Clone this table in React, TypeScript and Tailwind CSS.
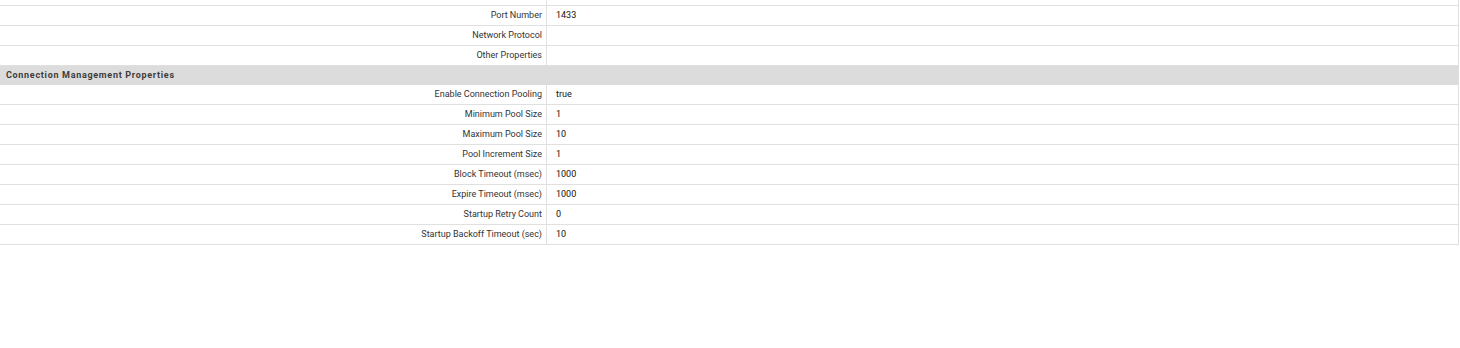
const top = [
  { label: "Port Number", value: "1433" },
  { label: "Network Protocol", value: "" },
  { label: "Other Properties", value: "" },
];

const pool = [
  { label: "Enable Connection Pooling", value: "true" },
  { label: "Minimum Pool Size", value: "1" },
  { label: "Maximum Pool Size", value: "10" },
  { label: "Pool Increment Size", value: "1" },
  { label: "Block Timeout (msec)", value: "1000" },
  { label: "Expire Timeout (msec)", value: "1000" },
  { label: "Startup Retry Count", value: "0" },
  { label: "Startup Backoff Timeout (sec)", value: "10" },
];

function Row({ label, value }: { label: string; value: string }) {
  return (
    <div className="flex h-[20px] border-b border-[#e0e0e0]">
      <div className="flex w-[547px] shrink-0 items-center justify-end border-r border-[#e0e0e0] pr-[4px] text-[#333333]">
        {label}
      </div>
      <div className="flex items-center pl-[9px] text-[#111111]">{value}</div>
    </div>
  );
}

export default function App() {
  return (
    <div className="h-[348px] w-full bg-white font-['Roboto',sans-serif] text-[9px]">
      <div className="w-[1459px] border-r border-[#e0e0e0]">
        <div className="flex h-[6px] border-b border-[#e0e0e0]">
          <div className="w-[547px] border-r border-[#e0e0e0]" />
        </div>
        {top.map((r) => (
          <Row key={r.label} {...r} />
        ))}
        <div className="flex h-[19px] items-center bg-[#dcdcdc] pl-[6px] font-bold tracking-[0.7px] text-[#3d3d3d]">
          Connection Management Properties
        </div>
        {pool.map((r) => (
          <Row key={r.label} {...r} />
        ))}
      </div>
    </div>
  );
}
